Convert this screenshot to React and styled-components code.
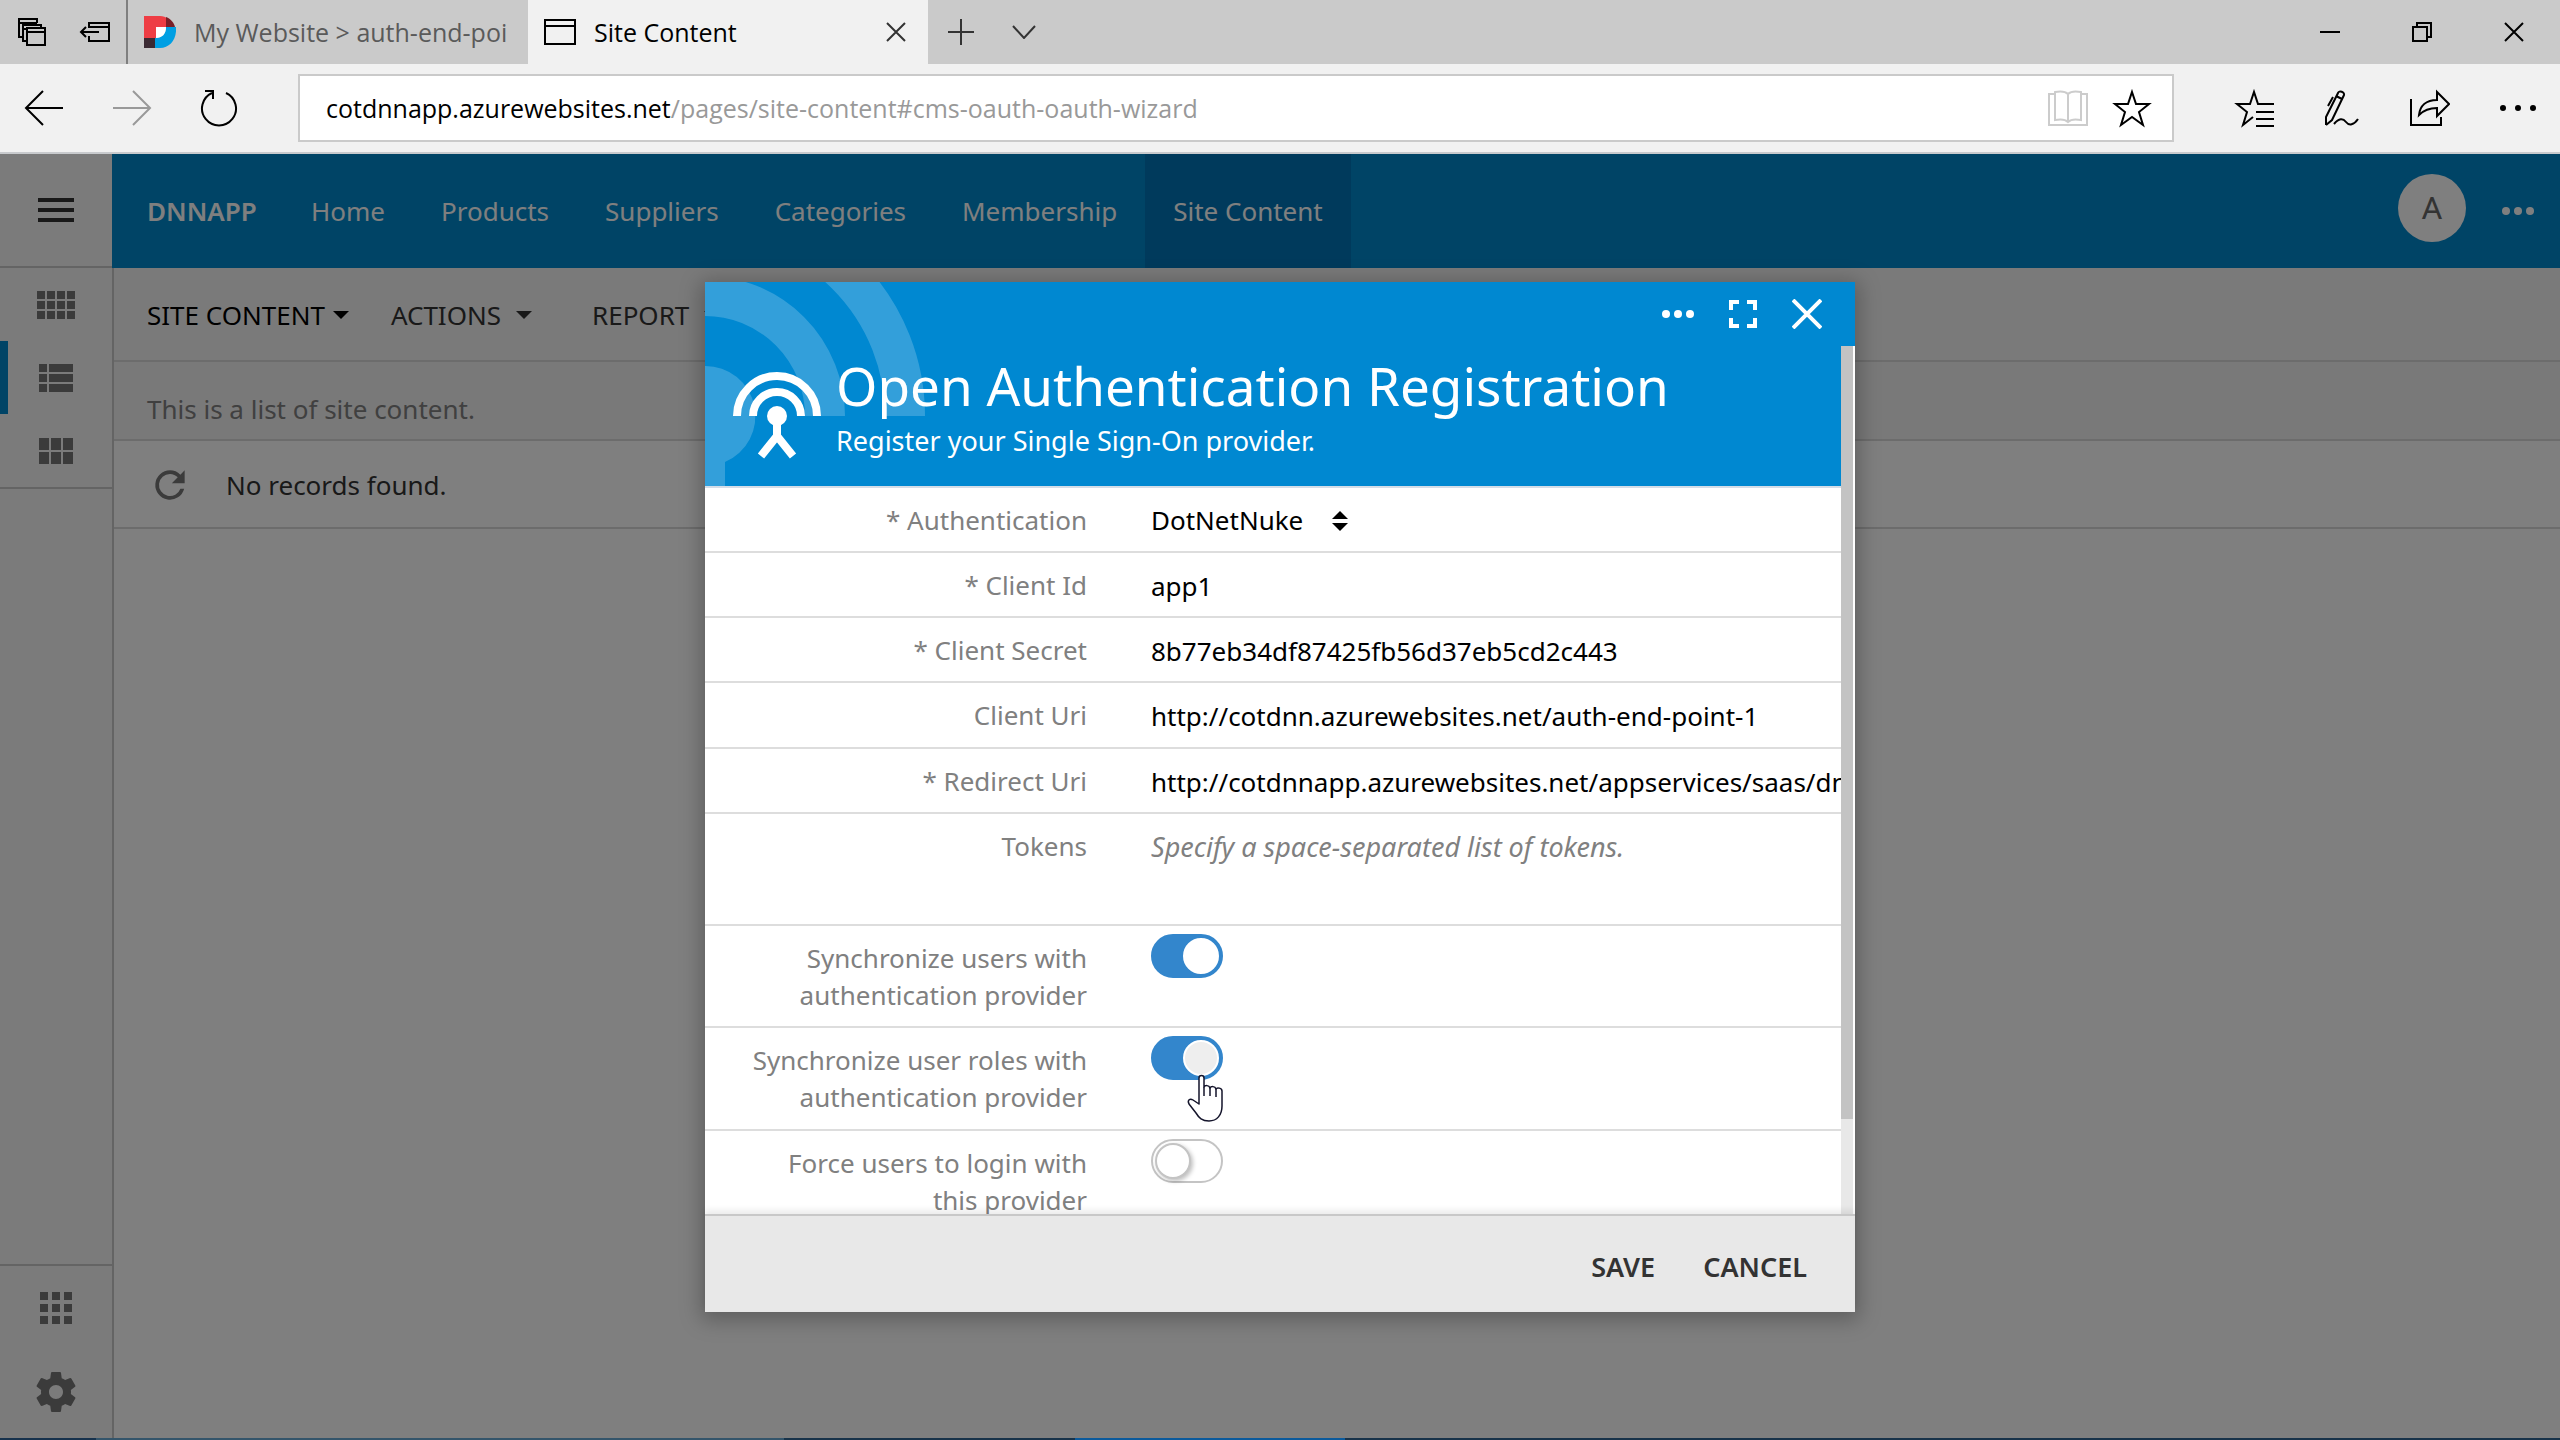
import React, { useState } from 'react';
import styled, { createGlobalStyle, css } from 'styled-components';

const GlobalStyle = createGlobalStyle`
  *,
  *::before {
    box-sizing: border-box;
  }

  body {
    margin: 0;
    background: #ffffff;
    font-family: 'Noto Sans', 'Open Sans', sans-serif;
    font-size: 26px;
    line-height: 37px;
  }

  button,
  input,
  select,
  textarea {
    margin: 0;
    padding: 0;
    border: none;
    background: none;
    color: inherit;
    font: inherit;
  }

  svg {
    display: block;
    flex: none;
  }
`;

const Window = styled.div`
  display: flex;
  flex-direction: column;
  height: 100vh;
  overflow: hidden;
`;

/* ---------- browser chrome ---------- */

const TabBar = styled.div`
  display: flex;
  align-items: stretch;
  height: 64px;
  flex: none;
  background: #cacaca;
  color: #000000;
  font-family: 'Open Sans', sans-serif;
  font-size: 25px;
`;

const TabTools = styled.div`
  display: flex;
  align-items: center;
  gap: 32px;
  width: 128px;
  padding-left: 17px;
  border-right: 2px solid #7f7f7f;
`;

const Tab = styled.div`
  display: flex;
  align-items: center;
  gap: 18px;
  width: 400px;
  padding: 0 22px 0 16px;
  background: ${(props) => (props.$active ? '#f1f1f1' : 'transparent')};
  color: ${(props) => (props.$active ? '#000000' : '#5a5a5a')};
`;

const TabTitle = styled.span`
  flex: 1;
  overflow: hidden;
  white-space: nowrap;
`;

const BarButton = styled.button`
  display: flex;
  align-items: center;
  justify-content: center;
  flex: none;
  color: ${(props) => props.$color || '#000000'};
  cursor: pointer;
`;

const TabActions = styled.div`
  display: flex;
  align-items: center;
  gap: 38px;
  flex: 1;
  padding-left: 20px;
`;

const WindowButtons = styled.div`
  display: flex;
  align-items: center;
  gap: 72px;
  padding-right: 36px;
`;

const AddressBar = styled.div`
  display: flex;
  align-items: center;
  height: 90px;
  flex: none;
  padding: 0 24px;
  background: #f1f1f1;
  border-bottom: 2px solid #c8cacd;
`;

const HistoryButtons = styled.div`
  display: flex;
  align-items: center;
  gap: 48px;
  width: 274px;
`;

const AddressBox = styled.div`
  display: flex;
  align-items: center;
  flex: 1;
  height: 68px;
  padding: 0 20px 0 26px;
  gap: 24px;
  background: #ffffff;
  border: 2px solid #cacaca;
  font-family: 'Open Sans', sans-serif;
  font-size: 25px;
`;

const Address = styled.div`
  flex: 1;
  overflow: hidden;
  white-space: nowrap;
  color: #999999;
  outline: none;
`;

const Host = styled.span`
  color: #000000;
`;

const HubButtons = styled.div`
  display: flex;
  align-items: center;
  gap: 50px;
  padding-left: 60px;
`;

/* ---------- application ---------- */

const AppArea = styled.div`
  position: relative;
  display: flex;
  flex: 1;
  min-height: 0;
`;

const Rail = styled.nav`
  display: flex;
  flex-direction: column;
  justify-content: space-between;
  width: 112px;
  background: #f6f6f6;
  color: #777777;
`;

const RailGroup = styled.div`
  display: flex;
  flex-direction: column;
`;

const RailSection = styled.div`
  display: flex;
  flex-direction: column;
  padding-bottom: ${(props) => (props.$top ? 4 : 0)}px;
  border-top: ${(props) => (props.$top ? '2px solid #c8c8c8' : 'none')};
  border-bottom: ${(props) => (props.$top ? 'none' : '2px solid #c8c8c8')};
`;

const RailButton = styled.button`
  display: flex;
  align-items: center;
  justify-content: center;
  height: ${(props) => props.$height || 73}px;
  border-left: 8px solid ${(props) => (props.$active ? '#0088cc' : 'transparent')};
  border-right: 8px solid transparent;
  color: ${(props) => props.$color || 'inherit'};
  cursor: pointer;
`;

const Main = styled.div`
  display: flex;
  flex-direction: column;
  flex: 1;
  min-width: 0;
`;

const NavBar = styled.header`
  display: flex;
  align-items: center;
  height: 114px;
  flex: none;
  padding: 0 26px 0 35px;
  background: #0088cc;
  color: #ffffff;
`;

const Brand = styled.strong`
  width: 136px;
  font-weight: 600;
`;

const NavLink = styled.a`
  height: 114px;
  padding: 0 28px;
  line-height: 114px;
  background: ${(props) => (props.$active ? '#0074b8' : 'transparent')};
  color: inherit;
  text-decoration: none;
`;

const Spacer = styled.div`
  flex: 1;
`;

const Avatar = styled.button`
  width: 68px;
  height: 68px;
  margin: 0 36px 6px 0;
  border-radius: 50%;
  background: #ffffff;
  color: #666666;
  font-family: Roboto, sans-serif;
  font-size: 32px;
`;

const Content = styled.div`
  flex: 1;
  border-left: 2px solid #c8c8c8;
  background: #ffffff;
`;

const ActionBar = styled.div`
  display: flex;
  align-items: center;
  gap: 42px;
  height: 94px;
  padding: 2px 33px 0;
  border-bottom: 2px solid #d8d8d8;
  background: #f4f4f4;
`;

const ActionButton = styled.button`
  display: flex;
  align-items: center;
  gap: ${(props) => (props.$current ? 8 : 15)}px;
  padding-right: ${(props) => (props.$current ? 0 : 18)}px;
  color: ${(props) => (props.$current ? '#000000' : '#333333')};
  cursor: pointer;
`;

const Caret = styled.span`
  border: 8px solid transparent;
  border-top-color: currentColor;
  border-bottom: none;
`;

const Summary = styled.p`
  display: flex;
  align-items: center;
  height: 79px;
  margin: 0;
  padding: 18px 33px 0;
  border-bottom: 2px solid #d8d8d8;
  background: #f2f2f2;
  color: #808080;
`;

const EmptyRow = styled.div`
  display: flex;
  align-items: center;
  gap: 34px;
  height: 88px;
  padding: 2px 34px 0;
  border-bottom: 2px solid #d8d8d8;
  color: #333333;
`;

/* ---------- dialog ---------- */

const Backdrop = styled.div`
  position: absolute;
  inset: 0;
  display: flex;
  justify-content: center;
  padding: 128px 0 126px;
  background: rgba(0, 0, 0, 0.5);
`;

const Dialog = styled.section`
  display: flex;
  flex-direction: column;
  width: min(1150px, 90%);
  background: #ffffff;
  box-shadow: 0 4px 20px 4px rgba(0, 0, 0, 0.26);
`;

const DialogTop = styled.div`
  position: relative;
  display: flex;
  align-items: center;
  justify-content: flex-end;
  gap: 35px;
  height: 64px;
  flex: none;
  padding-right: 33px;
  background: #0088d1;
`;

const Artwork = styled.svg`
  position: absolute;
  top: 0;
  left: 0;
`;

const DialogBody = styled.div`
  display: flex;
  flex: 1;
  min-height: 0;
`;

const Form = styled.form`
  flex: 1;
  min-width: 0;
  overflow: hidden;
`;

const Track = styled.div`
  width: 12px;
  margin-right: 2px;
  background: #e8e8e8;
`;

const Thumb = styled.div`
  height: 89%;
  background: #c3c3c3;
`;

const Banner = styled.div`
  display: flex;
  gap: 14px;
  height: 142px;
  padding: 4px 0 0 27px;
  border-bottom: 2px solid #d4dde8;
  background: #0088d1;
  color: #ffffff;
`;

const BannerText = styled.div`
  position: relative;
`;

const Title = styled.h1`
  margin: 0;
  font-size: 53px;
  font-weight: 400;
  line-height: 72px;
`;

const Subtitle = styled.p`
  margin: 0;
  font-size: 27px;
`;

const Row = styled.div`
  display: grid;
  grid-template-columns: 382px 1fr;
  column-gap: 64px;
  height: ${(props) => props.$height || 65}px;
  border-bottom: 2px solid #dddddd;
`;

const Label = styled.label`
  padding-top: 14px;
  color: #808080;
  text-align: right;
  white-space: pre-line;
`;

const fieldText = css`
  width: 100%;
  padding: 14px 0;
  color: #000000;
  outline: none;
`;

const TextBox = styled.input`
  ${fieldText}
  height: 65px;
`;

const TextArea = styled.textarea`
  ${fieldText}
  height: 100px;
  resize: none;

  &::placeholder {
    color: #808080;
    font-size: 27px;
    font-style: italic;
  }
`;

const SelectBox = styled.div`
  display: flex;
  align-items: center;
  gap: 28px;
  height: 65px;
`;

const Select = styled.select`
  appearance: none;
  color: #000000;
  outline: none;
`;

const Switch = styled.input`
  appearance: none;
  display: flex;
  align-items: center;
  width: 72px;
  height: 44px;
  margin-top: 8px;
  padding: 0 2px;
  border: 2px solid #c4c4c4;
  border-radius: 22px;
  background: #ffffff;
  cursor: pointer;

  &::before {
    content: '';
    width: 36px;
    height: 36px;
    border: 2px solid #c4c4c4;
    border-radius: 50%;
    background: #ffffff;
    box-shadow: 2px 2px 4px rgba(0, 0, 0, 0.25);
  }

  &:checked {
    justify-content: flex-end;
    border-color: #3386cc;
    background: #3386cc;
  }

  &:checked::before {
    border-color: #ffffff;
    background: ${(props) => (props.$pressed ? '#eeeeee' : '#ffffff')};
    box-shadow: none;
  }
`;

const SwitchCell = styled.div`
  position: relative;
`;

const Pointer = styled.svg`
  position: absolute;
  top: 45px;
  left: 35px;
`;

const Footer = styled.footer`
  position: relative;
  display: flex;
  align-items: center;
  justify-content: flex-end;
  gap: 48px;
  height: 98px;
  flex: none;
  padding: 4px 48px 0 0;
  border-top: 2px solid #c8c8c8;
  background: #e8e8e8;
  box-shadow: 0 -4px 6px rgba(0, 0, 0, 0.08);
`;

const FooterButton = styled.button`
  color: #333333;
  font-size: 27px;
  font-weight: 600;
  cursor: pointer;
`;

/* sliver of the system taskbar under the window */
const Taskbar = styled.div`
  display: grid;
  grid-template-columns: 96fr 688fr 291fr 270fr 1215fr;
  height: 2px;
  flex: none;
`;

const TaskbarItem = styled.span`
  background: ${(props) => props.$color};
`;

/* ---------- icons ---------- */

const Icon = ({ width, height = width, stroke = 2, children }) => (
  <svg
    width={width}
    height={height}
    viewBox={`0 0 ${width} ${height}`}
    fill="none"
    stroke="currentColor"
    strokeWidth={stroke}
    aria-hidden="true"
  >
    {children}
  </svg>
);

const TabsSetIcon = () => (
  <Icon width={30} height={30}>
    <path d="M6 20H2V2h18v4M2 6h18" />
    <path d="M10 24H6V8h18v3M6 12h4" />
    <path d="M10 11h18v17H10zM10 15h18" />
  </Icon>
);

const SetAsideIcon = () => (
  <Icon width={32} height={24}>
    <path d="M10 8V3h20v18H10v-5M10 7h20" />
    <path d="M20 12H2M7 7l-5 5 5 5" />
  </Icon>
);

const DnnLogo = () => (
  <svg width="32" height="32" viewBox="0 0 32 32" aria-hidden="true">
    <path d="M0 0h16c3 0 6 1 8 3v8H12v11H0z" fill="#ee3d44" />
    <path d="M22 1c5 2 8 6 9 10h-9z" fill="#7a1f28" />
    <path d="M22 11h10c1 12-6 21-16 21h-5V22c7 0 11-4 11-11z" fill="#009fe3" />
    <path d="M12 11h10c0 7-4 11-10 11z" fill="#ffffff" />
    <path d="M0 22h11v10H0z" fill="#3b2a33" />
  </svg>
);

const PageIcon = () => (
  <Icon width={32} height={28}>
    <path d="M1 2h30v24H1zM1 8h30" />
  </Icon>
);

const CrossIcon = ({ size = 20, stroke }) => (
  <Icon width={size} stroke={stroke}>
    <path d={`M1 1L${size - 1} ${size - 1}M${size - 1} 1L1 ${size - 1}`} />
  </Icon>
);

const PlusIcon = () => (
  <Icon width={26}>
    <path d="M13 0v26M0 13h26" />
  </Icon>
);

const ChevronIcon = () => (
  <Icon width={24} height={14}>
    <path d="M1 1l11 12L23 1" />
  </Icon>
);

const MinimizeIcon = () => (
  <Icon width={20}>
    <path d="M0 10h20" />
  </Icon>
);

const RestoreIcon = () => (
  <Icon width={20}>
    <path d="M1 5h14v14H1zM5 5V1h14v14h-4" />
  </Icon>
);

const BackIcon = () => (
  <Icon width={40} height={36}>
    <path d="M39 18H3M19 1L2 18l17 17" />
  </Icon>
);

const ForwardIcon = () => (
  <Icon width={40} height={36}>
    <path d="M1 18h36M21 1l17 17-17 17" />
  </Icon>
);

const ReloadIcon = () => (
  <Icon width={38} height={38}>
    <path d="M12 4A17 17 0 1 0 26 4" />
    <path d="M5 2h8v8" />
  </Icon>
);

const BookIcon = () => (
  <Icon width={40} height={38} stroke={2}>
    <path d="M7 5H1v31h38V5h-6" />
    <path d="M20 5c-3-3-8-3-13-2v28c5-1 10-1 13 2 3-3 8-3 13-2V3c-5-1-10-1-13 2zM20 5v28" />
  </Icon>
);

const StarIcon = () => (
  <Icon width={40} height={40}>
    <path d="M20 4l4 12h13L27 24l4 13-11-8-11 8 4-13L3 16h13z" />
  </Icon>
);

const FavoritesIcon = () => (
  <Icon width={40} height={40}>
    <path d="M40 16H24L20 4l-4 12H3l10 8-4 13 10-8" />
    <path d="M22 24h18M22 31h18M22 38h18" />
  </Icon>
);

const PenIcon = () => (
  <Icon width={36} height={38}>
    <path d="M2 36v-8L14 4c1-3 7-1 6 2L8 31l-6 5M12 7l6 3M9 8L4 17" />
    <path d="M10 35c5-6 9-6 12-2s8 3 12-3" />
  </Icon>
);

const ShareIcon = () => (
  <Icon width={40} height={38}>
    <path d="M1 10v26h30v-8" />
    <path d="M9 26c1-9 7-15 18-15V3l12 12-12 12v-8c-8 0-13 2-18 7z" />
  </Icon>
);

const Dots = ({ width, r, fill = 'currentColor' }) => (
  <svg width={width} height="12" aria-hidden="true">
    {[r, width / 2, width - r].map((cx) => (
      <circle key={cx} cx={cx} cy="6" r={r} fill={fill} />
    ))}
  </svg>
);

const MenuIcon = () => (
  <Icon width={36} height={24} stroke={4}>
    <path d="M0 2h36M0 12h36M0 22h36" />
  </Icon>
);

const BlocksIcon = ({ width, height, columns, rows, gap }) => {
  const w = (width - gap * (columns.length - 1)) / columns.reduce((a, b) => a + b, 0);
  const h = (height - gap * (rows - 1)) / rows;
  const blocks = [];
  for (let r = 0; r < rows; r += 1) {
    let x = 0;
    columns.forEach((span, c) => {
      blocks.push(
        <rect key={`${r}-${c}`} x={x} y={r * (h + gap)} width={w * span} height={h} fill="currentColor" />
      );
      x += w * span + gap;
    });
  }
  return (
    <svg width={width} height={height} aria-hidden="true">
      {blocks}
    </svg>
  );
};

const GearIcon = () => (
  <svg width="48" height="48" viewBox="0 0 24 24" fill="currentColor" aria-hidden="true">
    <path d="M19.43 12.98c.04-.32.07-.64.07-.98s-.03-.66-.07-.98l2.11-1.65c.19-.15.24-.42.12-.64l-2-3.46c-.12-.22-.39-.3-.61-.22l-2.49 1c-.52-.4-1.08-.73-1.69-.98l-.38-2.65C14.46 2.18 14.25 2 14 2h-4c-.25 0-.46.18-.49.42l-.38 2.65c-.61.25-1.17.59-1.69.98l-2.49-1c-.23-.09-.49 0-.61.22l-2 3.46c-.13.22-.07.49.12.64l2.11 1.65c-.04.32-.07.65-.07.98s.03.66.07.98l-2.11 1.65c-.19.15-.24.42-.12.64l2 3.46c.12.22.39.3.61.22l2.49-1c.52.4 1.08.73 1.69.98l.38 2.65c.03.24.24.42.49.42h4c.25 0 .46-.18.49-.42l.38-2.65c.61-.25 1.17-.59 1.69-.98l2.49 1c.23.09.49 0 .61-.22l2-3.46c.12-.22.07-.49-.12-.64l-2.11-1.65zM12 15.5c-1.93 0-3.5-1.57-3.5-3.5s1.57-3.5 3.5-3.5 3.5 1.57 3.5 3.5-1.57 3.5-3.5 3.5z" />
  </svg>
);

const RefreshIcon = () => (
  <svg width="44" height="44" viewBox="0 0 24 24" fill="#777777" aria-hidden="true">
    <path d="M17.65 6.35A7.96 7.96 0 0 0 12 4a8 8 0 1 0 7.73 10h-2.08A6 6 0 1 1 12 6c1.66 0 3.14.69 4.22 1.78L13 11h7V4l-2.35 2.35z" />
  </svg>
);

const FullscreenIcon = () => (
  <Icon width={28} stroke={4}>
    <path d="M2 10V2h8M18 2h8v8M26 18v8h-8M10 26H2v-8" />
  </Icon>
);

const AntennaIcon = () => (
  <Icon width={90} height={112} stroke={8}>
    <path d="M5 66a40 40 0 0 1 80 0M21 66a24 24 0 0 1 48 0" />
    <path d="M45 70v20M45 86L29 106M45 86l16 20" />
    <circle cx="45" cy="66" r="10" fill="currentColor" stroke="none" />
  </Icon>
);

const SortIcon = () => (
  <svg width="16" height="20" aria-hidden="true">
    <path d="M8 0l8 8H0zM0 12h16l-8 8z" fill="#000000" />
  </svg>
);

/* ---------- page ---------- */

const LINKS = ['Home', 'Products', 'Suppliers', 'Categories', 'Membership', 'Site Content'];

const TEXT_FIELDS = [
  { id: 'clientId', label: '* Client Id', value: 'app1' },
  { id: 'clientSecret', label: '* Client Secret', value: '8b77eb34df87425fb56d37eb5cd2c443' },
  { id: 'clientUri', label: 'Client Uri', value: 'http://cotdnn.azurewebsites.net/auth-end-point-1', height: 66 },
  { id: 'redirectUri', label: '* Redirect Uri', value: 'http://cotdnnapp.azurewebsites.net/appservices/saas/dnn' },
];

const SWITCHES = [
  { id: 'syncUsers', label: 'Synchronize users with\nauthentication provider', on: true, height: 102 },
  { id: 'syncRoles', label: 'Synchronize user roles with\nauthentication provider', on: true, height: 103, pressed: true },
  { id: 'forceLogin', label: 'Force users to login with\nthis provider', on: false, height: 103 },
];

function BrowserChrome() {
  return (
    <>
      <TabBar>
        <TabTools>
          <BarButton aria-label="Tabs you've set aside"><TabsSetIcon /></BarButton>
          <BarButton aria-label="Set these tabs aside"><SetAsideIcon /></BarButton>
        </TabTools>
        <Tab>
          <DnnLogo />
          <TabTitle>My Website &gt; auth-end-point-1</TabTitle>
        </Tab>
        <Tab $active>
          <PageIcon />
          <TabTitle>Site Content</TabTitle>
          <BarButton aria-label="Close tab" $color="#333333"><CrossIcon /></BarButton>
        </Tab>
        <TabActions>
          <BarButton aria-label="New tab" $color="#333333"><PlusIcon /></BarButton>
          <BarButton aria-label="Show tab previews" $color="#333333"><ChevronIcon /></BarButton>
        </TabActions>
        <WindowButtons>
          <BarButton aria-label="Minimize"><MinimizeIcon /></BarButton>
          <BarButton aria-label="Restore"><RestoreIcon /></BarButton>
          <BarButton aria-label="Close"><CrossIcon /></BarButton>
        </WindowButtons>
      </TabBar>
      <AddressBar>
        <HistoryButtons>
          <BarButton aria-label="Back"><BackIcon /></BarButton>
          <BarButton aria-label="Forward" $color="#999999"><ForwardIcon /></BarButton>
          <BarButton aria-label="Refresh"><ReloadIcon /></BarButton>
        </HistoryButtons>
        <AddressBox>
          <Address role="textbox" aria-label="Address" tabIndex={0}>
            <Host>cotdnnapp.azurewebsites.net</Host>/pages/site-content#cms-oauth-oauth-wizard
          </Address>
          <BarButton aria-label="Reading view" $color="#cccccc"><BookIcon /></BarButton>
          <BarButton aria-label="Add to favorites"><StarIcon /></BarButton>
        </AddressBox>
        <HubButtons>
          <BarButton aria-label="Hub"><FavoritesIcon /></BarButton>
          <BarButton aria-label="Make a web note"><PenIcon /></BarButton>
          <BarButton aria-label="Share"><ShareIcon /></BarButton>
          <BarButton aria-label="Settings"><Dots width={36} r={3} /></BarButton>
        </HubButtons>
      </AddressBar>
    </>
  );
}

function RegistrationDialog() {
  const [values, setValues] = useState(() =>
    Object.fromEntries([...TEXT_FIELDS.map((f) => [f.id, f.value]), ...SWITCHES.map((s) => [s.id, s.on])])
  );

  const update = (id, value) => setValues({ ...values, [id]: value });

  return (
    <Dialog role="dialog" aria-labelledby="dialog-title">
      <DialogTop>
        <Artwork width="230" height="204" viewBox="0 0 230 204" aria-hidden="true">
          <g fill="none" stroke="#ffffff" strokeOpacity="0.2" strokeWidth="40">
            <path d="M120 134A120 120 0 0 0 0 14" />
            <path d="M200 134A200 200 0 0 0 0-66" />
          </g>
          <path d="M0 84a50 50 0 0 1 20 96v24H0z" fill="#ffffff" fillOpacity="0.2" />
        </Artwork>
        <BarButton aria-label="More" $color="#ffffff"><Dots width={32} r={4} /></BarButton>
        <BarButton aria-label="Full screen" $color="#ffffff"><FullscreenIcon /></BarButton>
        <BarButton aria-label="Close dialog" $color="#ffffff"><CrossIcon size={30} stroke={4} /></BarButton>
      </DialogTop>
      <DialogBody>
        <Form id="registration" onSubmit={(e) => e.preventDefault()}>
          <Banner>
            <AntennaIcon />
            <BannerText>
              <Title id="dialog-title">Open Authentication Registration</Title>
              <Subtitle>Register your Single Sign-On provider.</Subtitle>
            </BannerText>
          </Banner>
          <Row>
            <Label htmlFor="authentication">* Authentication</Label>
            <SelectBox>
              <Select id="authentication" defaultValue="DotNetNuke">
                <option>DotNetNuke</option>
              </Select>
              <SortIcon />
            </SelectBox>
          </Row>
          {TEXT_FIELDS.map((field) => (
            <Row key={field.id} $height={field.height}>
              <Label htmlFor={field.id}>{field.label}</Label>
              <TextBox
                id={field.id}
                type="text"
                value={values[field.id]}
                onChange={(e) => update(field.id, e.target.value)}
              />
            </Row>
          ))}
          <Row $height={112}>
            <Label htmlFor="tokens">Tokens</Label>
            <TextArea id="tokens" placeholder="Specify a space-separated list of tokens." />
          </Row>
          {SWITCHES.map((item) => (
            <Row key={item.id} $height={item.height}>
              <Label htmlFor={item.id}>{item.label}</Label>
              <SwitchCell>
                <Switch
                  id={item.id}
                  type="checkbox"
                  checked={values[item.id]}
                  $pressed={item.pressed}
                  onChange={(e) => update(item.id, e.target.checked)}
                />
                {item.pressed && (
                  <Pointer width="38" height="50" viewBox="0 0 38 50" aria-hidden="true">
                    <path
                      d="M13 31V5a2.5 2.5 0 0 1 5 0v9c1-2 5-2 6 1 1-2 5-2 6 1 1-2 6-1 6 2v15c0 9-5 15-13 15-7 0-10-3-13-8L3 31c-2-4 1-6 4-4z"
                      fill="#ffffff"
                      stroke="#14142b"
                      strokeWidth="1.5"
                      strokeLinejoin="round"
                    />
                    <path d="M18 14v9M24 15v8M30 16v8" stroke="#14142b" strokeWidth="1.5" fill="none" />
                  </Pointer>
                )}
              </SwitchCell>
            </Row>
          ))}
        </Form>
        <Track>
          <Thumb />
        </Track>
      </DialogBody>
      <Footer>
        <FooterButton type="submit" form="registration">SAVE</FooterButton>
        <FooterButton type="button">CANCEL</FooterButton>
      </Footer>
    </Dialog>
  );
}

function App() {
  return (
    <Window>
      <GlobalStyle />
      <BrowserChrome />
      <AppArea>
        <Rail>
          <RailGroup>
            <RailSection>
              <RailButton aria-label="Menu" $height={112} $color="#333333"><MenuIcon /></RailButton>
            </RailSection>
            <RailSection>
              <RailButton aria-label="Grid view">
                <BlocksIcon width={38} height={28} columns={[1, 1, 1, 1]} rows={3} gap={2} />
              </RailButton>
              <RailButton aria-label="List view" $active>
                <BlocksIcon width={34} height={28} columns={[1, 3]} rows={3} gap={2} />
              </RailButton>
              <RailButton aria-label="Card view">
                <BlocksIcon width={34} height={26} columns={[1, 1, 1]} rows={2} gap={2} />
              </RailButton>
            </RailSection>
          </RailGroup>
          <RailSection $top>
            <RailButton aria-label="Apps" $height={84}>
              <BlocksIcon width={32} height={32} columns={[1, 1, 1]} rows={3} gap={4} />
            </RailButton>
            <RailButton aria-label="Settings" $height={84}><GearIcon /></RailButton>
          </RailSection>
        </Rail>
        <Main>
          <NavBar>
            <Brand>DNNAPP</Brand>
            {LINKS.map((link) => (
              <NavLink key={link} href="#" $active={link === 'Site Content'}>{link}</NavLink>
            ))}
            <Spacer />
            <Avatar>A</Avatar>
            <BarButton aria-label="More options" $color="#ffffff"><Dots width={32} r={4} /></BarButton>
          </NavBar>
          <Content>
            <ActionBar>
              <ActionButton $current>SITE CONTENT <Caret /></ActionButton>
              <ActionButton>ACTIONS <Caret /></ActionButton>
              <ActionButton>REPORT <Caret /></ActionButton>
            </ActionBar>
            <Summary>This is a list of site content.</Summary>
            <EmptyRow>
              <BarButton aria-label="Refresh list"><RefreshIcon /></BarButton>
              No records found.
            </EmptyRow>
          </Content>
        </Main>
        <Backdrop>
          <RegistrationDialog />
        </Backdrop>
      </AppArea>
      <Taskbar>
        <TaskbarItem $color="#17324d" />
        <TaskbarItem $color="#34556b" />
        <TaskbarItem $color="#18334a" />
        <TaskbarItem $color="#0b5a9c" />
        <TaskbarItem $color="#18334a" />
      </Taskbar>
    </Window>
  );
}

export default App;
